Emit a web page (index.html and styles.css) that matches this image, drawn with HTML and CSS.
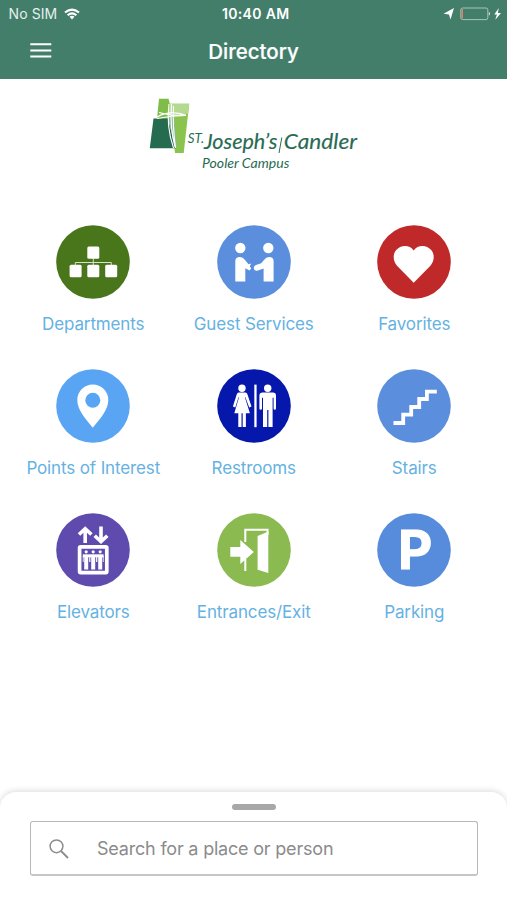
FILE: index.html
```html
<!DOCTYPE html>
<html lang="en">
<head>
<meta charset="utf-8">
<title>Directory</title>
<link rel="stylesheet" href="styles.css">
</head>
<body>
<div class="app">
  <header class="header">
    <div class="status">
      <div class="carrier"><span>No SIM</span>
        <svg width="16" height="12" viewBox="0 0 16 12" fill="none" stroke="#fff" stroke-width="2"><path d="M1 4.6Q8-1.4 15 4.6M3.6 7.3Q8 3.5 12.4 7.3"/><path d="M5.5 8.7Q8 6.9 10.5 8.7L8 11.4Z" fill="#fff" stroke="none"/></svg>
      </div>
      <div class="time">10:40 AM</div>
      <div class="power">
        <svg width="60" height="14" viewBox="0 0 60 14"><path d="M.5 6.7 11 1 7.5 12.5 6 7.4Z" fill="#fff"/><rect x="17.8" y="1" width="27" height="11.6" rx="1.8" fill="none" stroke="#a5c4b8"/><path d="M18.5 2h1.5v9.6h-1.5z" fill="#d98573"/><path d="M45.8 4.8q2.6 2 0 4z" fill="#d5e5df"/><path d="M55.8 1 51.3 7.6h2.6L52.3 12.8 58 6H54.8Z" fill="#fff"/></svg>
      </div>
    </div>
    <div class="nav">
      <svg class="menu" width="22" height="17" viewBox="0 0 22 17" stroke="#fff" stroke-width="2"><path d="M.3 1.3h21M.3 7.5h21M.3 13.6h21"/></svg>
      <h1>Directory</h1>
    </div>
  </header>

  <main class="main">
    <svg class="logo" width="230" height="90" viewBox="0 0 230 90">
      <path d="M19 8.8h9.5l1.4 5h-.5l-1 15H17z" fill="#7fbd4a"/>
      <path d="M28.5 13.8h20.7L43.7 63H35z" fill="#8bc34f"/>
      <path d="M30 13.8h19.2l-1.1 10H29z" fill="#b4d990"/>
      <path d="M13.5 28.5h14.5l8 29.7H9.8z" fill="#256b4f"/>
      <path d="M27.5 26l7.5 32 2 0-3-35z" fill="#8cba94"/>
      <g fill="none" stroke="#fff" stroke-width="1.1"><path d="M17 27q12-7 29-2M17 28.5q15-3 29-3M19 22.5q10 3 24 2.5M29 14q-3 22 4.5 44M31.5 14q-2 22 3.5 43M33.5 16q-1 20 2 42"/></g>
      <g fill="#286b52" font-family="Lato, 'Liberation Sans', sans-serif" font-style="italic" font-weight="400">
        <text x="47.8" y="53.3" font-size="12.5" textLength="16.2" lengthAdjust="spacingAndGlyphs">ST.</text>
        <g stroke="#286b52" stroke-width=".15">
        <text x="64" y="58.7" font-size="21" textLength="73.3" lengthAdjust="spacingAndGlyphs">Joseph’s</text>
        <path d="M141.8 47.5 139 63" stroke-width="1"/>
        <text x="143.8" y="58.7" font-size="21" textLength="73.2" lengthAdjust="spacingAndGlyphs">Candler</text>
        </g>
        <text x="62" y="77.7" font-size="13" textLength="87.3" lengthAdjust="spacingAndGlyphs">Pooler Campus</text>
      </g>
    </svg>

    <div class="grid">
      <a class="item"><svg class="icon" viewBox="0 0 74 74"><circle cx="37" cy="37" r="36.8" fill="#49751b"/><path d="M37.3 33v7M19.3 40v-2.5h36V40" fill="none" stroke="#d6e2ca"/><g fill="#fff"><rect x="31.3" y="21.4" width="12" height="12.3" rx="1.5"/><rect x="13.6" y="39.8" width="12" height="12.5" rx="1.5"/><rect x="31.3" y="39.8" width="12" height="12.5" rx="1.5"/><rect x="49.2" y="39.8" width="12" height="12.5" rx="1.5"/></g></svg><span>Departments</span></a>

      <a class="item"><svg class="icon" viewBox="0 0 74 74"><circle cx="37" cy="37" r="36.8" fill="#5b8fdd"/><g fill="#fff"><circle cx="23.3" cy="23" r="5.2"/><circle cx="51.3" cy="23" r="5.2"/><path d="M18.3 56.4V36Q18.3 32 23 32Q26 32 28 35L31.5 39.2 34.2 38.6 32.8 41.3 34.2 43.4 32.5 45.6 28.3 43.2V56.4Z"/><path d="M56.6 56.4V36Q56.6 32 52 32Q49 32 47 35L44.2 38.2 39 40Q36 41.5 37 44Q38 46.6 41 45.5L46.6 43.5V56.4Z"/></g></svg><span>Guest Services</span></a>

      <a class="item"><svg class="icon" viewBox="0 0 74 74"><circle cx="37" cy="37" r="36.8" fill="#bf2929"/><path d="M36.7 57.8 20 40.8C16.2 36.8 15.4 29.5 19 25.3C23.7 19.5 32.7 19.6 36.7 25.5C40.7 19.6 49.7 19.5 54.4 25.3C58 29.5 57.2 36.8 53.4 40.8Z" fill="#fff"/></svg><span>Favorites</span></a>

      <a class="item"><svg class="icon" viewBox="0 0 74 74"><circle cx="37" cy="37" r="36.8" fill="#5aa4f4"/><path d="M36.8 58.8C30 50 21.3 41.5 21.3 31A15.5 15.5 0 0 1 52.3 31C52.3 41.5 43.6 50 36.8 58.8Z" fill="#fff"/><circle cx="36.8" cy="31.3" r="7.5" fill="#5aa4f4"/></svg><span>Points of Interest</span></a>

      <a class="item"><svg class="icon" viewBox="0 0 74 74"><circle cx="37" cy="37" r="36.8" fill="#0618ab"/><g fill="#fff"><circle cx="25" cy="19.2" r="3.7"/><path d="M21.8 23.6h6.6q1.5 0 2.1 1.8l4 12-2.3 1-3.8-10.2h-.5l5 16H28.9V58h-3.2V44.2h-1.2V58h-3.2V44.2h-4L22 28.2h-.5l-3.2 10.2-2.4-1 3.8-12q.6-1.8 2.1-1.8z"/><rect x="37.3" y="15.6" width="2.3" height="42.6"/><circle cx="50.7" cy="19.2" r="3.7"/><path d="M45.6 23.6h10.2q3.2 0 3.2 3.3v12.5q0 1.3-1.2 1.3t-1.2-1.3V28.8h-1V58h-4.2V41h-1.2v17H46V28.8h-1v10.6q0 1.3-1.3 1.3t-1.3-1.3V26.9q0-3.3 3.2-3.3z"/></g></svg><span>Restrooms</span></a>

      <a class="item"><svg class="icon" viewBox="0 0 74 74"><circle cx="37" cy="37" r="36.8" fill="#5b8fdd"/><path d="M16.5 54h9.7v-8.3h8V38h8v-8h7.7v-7.4h9.9" fill="none" stroke="#fff" stroke-width="3.8"/></svg><span>Stairs</span></a>

      <a class="item"><svg class="icon" viewBox="0 0 74 74"><circle cx="37" cy="37" r="36.8" fill="#5f4bae"/><g fill="none" stroke="#fff" stroke-width="3.6"><path d="M29.2 30V16M23 21.5l6.2-5.8 6.2 5.8M45 13.5v14M38.7 22.7l6.3 5.8 6.3-5.8"/><rect x="23.6" y="33.8" width="27.2" height="25.8" rx="1" stroke-width="3.7"/></g><g fill="#fff"><circle cx="30.2" cy="38.8" r="1.6"/><circle cx="37.2" cy="38.8" r="1.6"/><circle cx="44.2" cy="38.8" r="1.6"/><path d="M26.8 41.3h20.8v3H26.8z"/><path d="M28.2 43h4v13.5h-4zM35.2 43h4v13.5h-4zM42.2 43h4v13.5h-4z"/><path d="M26.8 43h.8v6h-.8zM33.2 43h1.200v6h-1.200zM40.100 43h1.200v6h-1.200zM46.800 43h.8v6h-.8z"/></g></svg><span>Elevators</span></a>

      <a class="item"><svg class="icon" viewBox="0 0 74 74"><circle cx="37" cy="37" r="36.8" fill="#8aba50"/><path d="M28.3 29V16.7h22.3V22M28.3 46v12" fill="none" stroke="#fff" stroke-width="2"/><path d="M40.6 23 51.3 18.5V60L40.6 56.7ZM13.3 34h10v-7L36.8 39 23.3 51v-7.3h-10Z" fill="#fff"/></svg><span>Entrances/Exit</span></a>

      <a class="item"><svg class="icon" viewBox="0 0 74 74"><circle cx="37" cy="37" r="36.8" fill="#578bdc"/><text class="p" x="20.9" y="56">P</text></svg><span>Parking</span></a>
    </div>
  </main>

  <section class="sheet">
    <div class="handle"></div>
    <div class="search">
      <svg width="20" height="20" viewBox="0 0 20 20" fill="none" stroke="#8c8c8c" stroke-width="1.5"><circle cx="7.5" cy="7.3" r="6.4"/><path d="M12 12l7 7" stroke-width="1.8"/></svg>
      <span>Search for a place or person</span>
    </div>
  </section>
</div>
</body>
</html>
```
FILE: styles.css
```css
* { box-sizing: border-box; }
body { margin: 0; background: #fff; font-family: Inter, "Liberation Sans", sans-serif; }
.app { width: 507px; height: 900px; display: flex; flex-direction: column; overflow: hidden; }
.header { height: 79.4px; flex: none; background: #437e6b; color: #fff; }
.status { height: 27px; display: grid; grid-template-columns: 1fr auto 1fr; align-items: center; padding: 0 4px 0 8.5px; font-size: 14px; }
.carrier { display: flex; align-items: center; gap: 6.5px; color: #e6f0ec; letter-spacing: .1px; }
.time { font-weight: 600; font-size: 14px; letter-spacing: .35px; }
.power { display: flex; justify-content: flex-end; }
.nav { height: 49px; display: grid; grid-template-columns: 1fr auto 1fr; align-items: center; padding: 0 30px; }
.nav h1 { margin: 0; font-size: 20.5px; font-weight: 500; -webkit-text-stroke: .2px #fff; }
.main { flex: 1; padding-top: 10.6px; }
.logo { display: block; margin-left: 140px; }
.grid { display: grid; grid-template-columns: repeat(3, 160.5px); grid-auto-rows: 144px; padding-left: 13px; margin-top: 45.3px; }
.item { display: flex; flex-direction: column; align-items: center; gap: 14.7px; color: #65b2e2; font-size: 17px; line-height: 21px; letter-spacing: -.13px; white-space: nowrap; }
.icon { width: 74px; height: 74px; flex: none; }
.p { font-family: Inter, sans-serif; font-size: 53px; font-weight: 700; letter-spacing: 0; fill: #fff; stroke: #fff; stroke-width: 1px; }
.sheet { height: 108px; flex: none; background: #fff; border-radius: 16px 16px 0 0; box-shadow: 0 -1px 6px rgba(0,0,0,.15); padding: 12px 29px 0 30px; }
.handle { width: 44px; height: 6px; border-radius: 3px; background: #a8a8a8; margin: 0 auto; }
.search { margin-top: 11px; height: 55px; border: 1.5px solid #b8b8b8; border-bottom: 2px solid #c6c6c6; border-radius: 3px; display: flex; align-items: center; gap: 28px; padding: 1px 0 0 18px; color: #8b8b8b; font-size: 18px; letter-spacing: -.2px; }
```
